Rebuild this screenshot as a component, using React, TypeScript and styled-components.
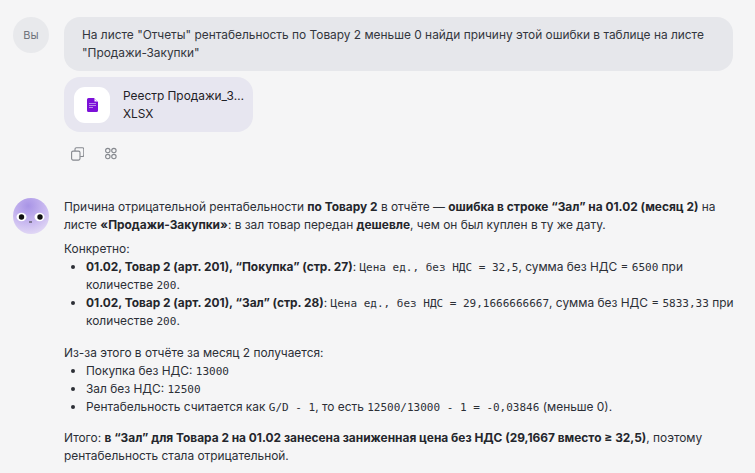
import React from "react";
import styled, { createGlobalStyle } from "styled-components";

const Global = createGlobalStyle`
  html, body { margin: 0; padding: 0; background: #f5f5f6; }
  body { font-family: Inter, "Noto Sans", sans-serif; font-size: 11.9px; line-height: 18px; color: #2c2f36; overflow: hidden; }
`;

const Page = styled.main`
  display: flex;
  flex-direction: column;
  width: 755px;
  height: 473px;
  padding: 17px 22px 0 13px;
  box-sizing: border-box;
  overflow: hidden;
`;
const Row = styled.section<{ $gap?: number }>`
  display: flex;
  gap: 15px;
  margin-bottom: ${(p) => p.$gap ?? 0}px;
`;
const UserAvatar = styled.div`
  width: 36px;
  height: 36px;
  flex: none;
  border-radius: 50%;
  background: #e8e9ec;
  color: #70747c;
  font-size: 11px;
  display: flex;
  align-items: center;
  justify-content: center;
`;
const Column = styled.div`
  flex: 1;
  min-width: 0;
  display: flex;
  flex-direction: column;
`;
const Bubble = styled.div`
  background: #e6e7eb;
  border-radius: 16px;
  padding: 9px 18px;
  color: #33363d;
`;
const Attachment = styled.div`
  align-self: flex-start;
  margin-top: 6px;
  width: 189px;
  height: 55px;
  box-sizing: border-box;
  padding: 10px 0 10px 10px;
  display: flex;
  gap: 13px;
  background: #e7e6f0;
  border-radius: 16px;
  color: #1f2126;
`;
const FileIcon = styled.div`
  width: 36px;
  height: 36px;
  flex: none;
  border-radius: 11px;
  background: #ffffff;
  display: flex;
  align-items: center;
  justify-content: center;
`;
const FileText = styled.div`
  flex: none;
  width: 122px;
  white-space: nowrap;
  overflow: hidden;
  text-overflow: ellipsis;
`;
const Actions = styled.div`
  display: flex;
  gap: 21px;
  margin: 15px 0 0 7px;
  height: 14px;
  color: #85888e;
`;
const Paragraph = styled.p<{ $top?: number }>`
  margin: ${(p) => p.$top ?? 0}px 0 0;
`;
const List = styled.ul`
  margin: 0 -6px 0 0;
  padding: 0 0 0 22px;
  li::marker { font-size: 12px; }
`;
const Code = styled.code`
  font-family: "DejaVu Sans Mono", monospace;
  font-size: 11px;
  line-height: 1;
`;
const Strong = styled.strong`
  font-weight: 700;
  color: #24262c;
`;

const Face = () => (
  <svg width="36" height="36" viewBox="0 0 36 36" style={{ flex: "none" }}>
    <defs>
      <radialGradient id="f" cx="0.42" cy="0.22" r="0.95">
        <stop offset="0" stopColor="#a894e6" />
        <stop offset="0.5" stopColor="#c9b9f0" />
        <stop offset="1" stopColor="#ece6f7" />
      </radialGradient>
    </defs>
    <circle cx="18" cy="18" r="18" fill="url(#f)" />
    <ellipse cx="8.5" cy="19" rx="5" ry="4.2" fill="#fff" />
    <ellipse cx="26.5" cy="19" rx="5" ry="4.2" fill="#fff" />
    <circle cx="8.5" cy="19" r="2.7" fill="#111" />
    <circle cx="27" cy="19" r="2.7" fill="#111" />
    <rect x="16" y="23.5" width="3" height="1" fill="#333" />
  </svg>
);

export default function App() {
  return (
    <>
      <Global />
      <Page>
        <Row $gap={37}>
          <UserAvatar>Вы</UserAvatar>
          <Column>
            <Bubble>
              На листе "Отчеты" рентабельность по Товару 2 меньше 0 найди причину этой ошибки в таблице на листе
              "Продажи-Закупки"
            </Bubble>
            <Attachment>
              <FileIcon>
                <svg width="11" height="14" viewBox="0 0 11 14">
                  <path d="M1.5 0H7l4 4v8.5a1.5 1.5 0 0 1-1.5 1.5h-8A1.5 1.5 0 0 1 0 12.5v-11A1.5 1.5 0 0 1 1.5 0z" fill="#7c10d8" />
                  <path d="M7.5 0.5L10.5 3.5H7.5z" fill="#fff" />
                  <path d="M2 5.5h7M2 7.5h7M2 9.5h4" stroke="#b98ae8" strokeWidth="1" />
                </svg>
              </FileIcon>
              <FileText>
                Реестр Продажи_Закупки
                <br />
                XLSX
              </FileText>
            </Attachment>
            <Actions>
              <svg width="13" height="14" viewBox="0 0 13 14" fill="none" stroke="currentColor" strokeWidth="1.1">
                <rect x="0.6" y="4.1" width="8.4" height="9" rx="1.5" />
                <path d="M4 4V2.1a1.4 1.4 0 0 1 1.4-1.4h6a1.4 1.4 0 0 1 1.4 1.4v6a1.4 1.4 0 0 1-1.4 1.4H9.2" />
              </svg>
              <svg width="12" height="13" viewBox="0 0 12 13" fill="none" stroke="currentColor" strokeWidth="1.1">
                <circle cx="2.8" cy="3.6" r="2.2" />
                <circle cx="8.9" cy="3.6" r="2.2" />
                <circle cx="2.8" cy="9.6" r="2.2" />
                <circle cx="8.9" cy="9.6" r="2.2" />
              </svg>
            </Actions>
          </Column>
        </Row>
        <Row>
          <Face />
          <Column>
            <Paragraph>
              Причина отрицательной рентабельности <Strong>по Товару 2</Strong> в отчёте — <Strong>ошибка в строке “Зал” на 01.02 (месяц 2)</Strong> на
              листе <Strong>«Продажи-Закупки»</Strong>: в зал товар передан <Strong>дешевле</Strong>, чем он был куплен в ту же дату.
            </Paragraph>
            <Paragraph $top={6}>Конкретно:</Paragraph>
            <List>
              <li>
                <Strong>01.02, Товар 2 (арт. 201), “Покупка” (стр. 27)</Strong>: <Code>Цена ед., без НДС = 32,5</Code>, сумма без НДС = <Code>6500</Code> при
                количестве <Code>200</Code>.
              </li>
              <li>
                <Strong>01.02, Товар 2 (арт. 201), “Зал” (стр. 28)</Strong>: <Code>Цена ед., без НДС = 29,1666666667</Code>, сумма без НДС = <Code>5833,33</Code> при
                количестве <Code>200</Code>.
              </li>
            </List>
            <Paragraph $top={14}>Из-за этого в отчёте за месяц 2 получается:</Paragraph>
            <List>
              <li>Покупка без НДС: <Code>13000</Code></li>
              <li>Зал без НДС: <Code>12500</Code></li>
              <li>
                Рентабельность считается как <Code>G/D - 1</Code>, то есть <Code>12500/13000 - 1 = -0,03846</Code> (меньше 0).
              </li>
            </List>
            <Paragraph $top={13}>
              Итого: <Strong>в “Зал” для Товара 2 на 01.02 занесена заниженная цена без НДС (29,1667 вместо ≥ 32,5)</Strong>, поэтому
              рентабельность стала отрицательной.
            </Paragraph>
          </Column>
        </Row>
      </Page>
    </>
  );
}
